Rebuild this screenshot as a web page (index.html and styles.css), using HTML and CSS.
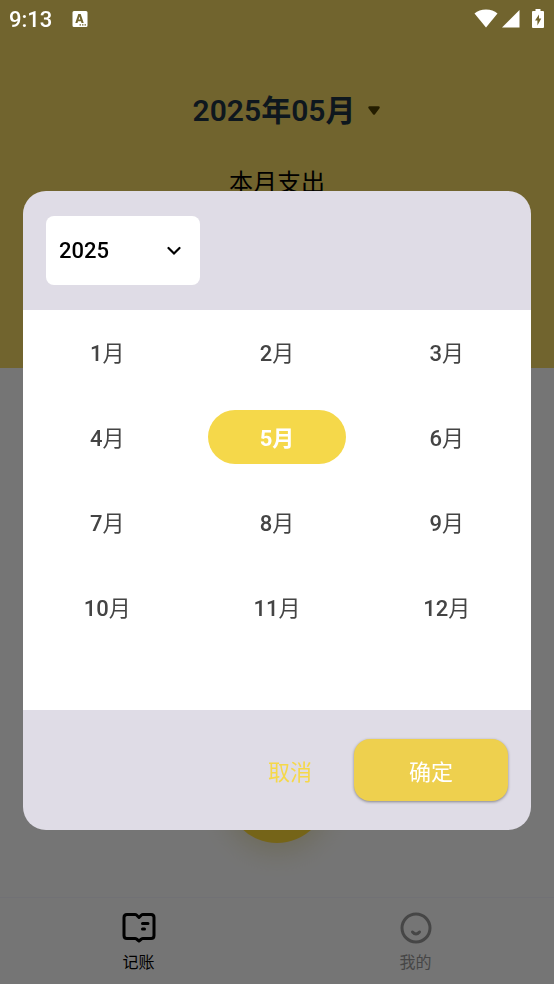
FILE: index.html
```
<!DOCTYPE html>
<html lang="zh-CN">
<head>
    <meta charset="UTF-8">
    <meta name="viewport" content="width=device-width, initial-scale=1.0">
    <title>记账</title>
    <link rel="stylesheet" href="styles.css">
</head>
<body>
    <div class="status-bar">
        <span class="time">9:13</span>
        <svg class="notice" width="16" height="18" viewBox="0 0 16 18">
            <path fill="#fff" fill-rule="evenodd" d="M2 1h12q1.500 0 1.500 1.500v13q0 1.500-1.500 1.500H2Q.5 17 .5 15.500v-13Q.5 1 2 1ZM6.300 4 3.300 13h2.200l.5-1.700h3l.5 1.700h2.200L8.700 4ZM7.500 6.500l.9 3.100H6.600ZM7.500 14.200v1.300h1.500v-1.300Zm2.500 0v1.300h1.500v-1.300Zm2.500 0v1.300H14v-1.300Z"/>
        </svg>
        <div class="signals">
            <svg width="24" height="20" viewBox="0 0 24 20"><path fill="#fff" d="M12 18.500 .5 4.500Q5 .5 12 .5t11.500 4Z"/></svg>
            <svg width="18" height="20" viewBox="0 0 18 20"><path fill="#fff" d="M17.500 1V18.500H0Z"/></svg>
            <svg width="12" height="20" viewBox="0 0 12 20"><path fill="#fff" fill-rule="evenodd" d="M3.500 0h5v2H11q1 0 1 1v15q0 1-1 1H1q-1 0-1-1V3q0-1 1-1h2.500ZM7 5.500 3 11.500h2.400v5L9.300 9.500H7Z"/></svg>
        </div>
    </div>

    <header class="hero">
        <button class="month-title">2025年05月
            <svg width="14" height="10" viewBox="0 0 14 10"><path d="M2.500 1.500h9L7 7.500Z" fill="#4f4000" stroke="#4f4000" stroke-width="2.500" stroke-linejoin="round"/></svg>
        </button>
        <p class="hero-label">本月支出</p>
    </header>
    <main class="content">
        <button class="add" aria-label="添加"></button>
    </main>
    <nav class="tabs">
        <a href="#" class="tab active">
            <svg width="34" height="32" viewBox="0 0 34 32" fill="none" stroke="currentColor" stroke-width="3" stroke-linecap="round" stroke-linejoin="round">
                <path d="M17 5.500 14.500 3Q14 2.500 13 2.500H5Q2 2.500 2 5.500v18q0 3 3 3h8q1 0 1.500.5l2.500 2 2.500-2q.5-.5 1.500-.5h8q3 0 3-3v-18q0-3-3-3h-8q-1 0-1.500.5Z"/>
                <path d="M20.500 11.500h5.500M20.500 17h2"/>
            </svg>
            记账
        </a>
        <a href="#" class="tab">
            <svg width="34" height="32" viewBox="0 0 34 32" fill="none" stroke="currentColor" stroke-width="3" stroke-linecap="round">
                <circle cx="17" cy="16" r="14"/>
                <path d="M13.500 20q3.500 4 7 0"/>
            </svg>
            我的
        </a>
    </nav>

    <div class="overlay">
        <div class="dialog" role="dialog" aria-label="选择月份">
            <div class="dialog-head">
                <div class="year">
                    <select aria-label="年份">
                        <option>2025</option>
                    </select>
                    <svg class="chevron" width="14" height="10" viewBox="0 0 14 10"><path d="m1.500 2 5.500 5.500L12.500 2" fill="none" stroke="#000" stroke-width="2.200" stroke-linecap="round"/></svg>
                </div>
            </div>
            <div class="months">
                <button>1<span>月</span></button>
                <button>2<span>月</span></button>
                <button>3<span>月</span></button>
                <button>4<span>月</span></button>
                <button class="selected">5月</button>
                <button>6<span>月</span></button>
                <button>7<span>月</span></button>
                <button>8<span>月</span></button>
                <button>9<span>月</span></button>
                <button>10<span>月</span></button>
                <button>11<span>月</span></button>
                <button>12<span>月</span></button>
            </div>
            <div class="dialog-foot">
                <button class="cancel">取消</button>
                <button class="confirm">确定</button>
            </div>
        </div>
    </div>
</body>
</html>
```
FILE: styles.css
```
* {
    box-sizing: border-box;
}
body {
    margin: 0;
    min-height: 100vh;
    display: flex;
    flex-direction: column;
    background: #fff;
    font-family: Roboto, "Noto Sans CJK SC", sans-serif;
}
button {
    border: none;
    background: none;
    padding: 0;
    font: inherit;
    cursor: pointer;
}

/* status bar stays above the overlay */
.status-bar {
    position: fixed;
    top: 0;
    left: 0;
    right: 0;
    z-index: 20;
    display: flex;
    align-items: center;
    height: 38px;
    padding: 0 10px 0 9px;
    color: #fff;
}
.time {
    font-size: 22px;
    font-weight: 500;
}
.notice {
    margin-left: 20px;
}
.signals {
    display: flex;
    gap: 4px;
    margin-left: auto;
}
.signals svg:last-child {
    margin-left: 8px;
}

.hero {
    min-height: 368px;
    padding-top: 89px;
    background: #f6d964;
    text-align: center;
}
.month-title {
    display: inline-flex;
    align-items: center;
    gap: 12px;
    padding-left: 20px;
    color: #1f3442;
    font-size: 30px;
    font-weight: 600;
    line-height: 44px;
}
.hero-label {
    margin: 32px 0 0;
    font-size: 24px;
    line-height: 36px;
}
.content {
    flex: 1;
    position: relative;
}
.add {
    position: absolute;
    left: 50%;
    bottom: 54px;
    width: 102px;
    height: 102px;
    margin-left: -51px;
    border-radius: 50%;
    background: #ffd935;
    box-shadow: 0 8px 28px rgba(220, 205, 130, 0.5);
}
.tabs {
    display: flex;
    height: 87px;
    border-top: 1px solid #f6f6ff;
    background: #fefefe;
}
.tab {
    flex: 1;
    display: flex;
    flex-direction: column;
    align-items: center;
    gap: 7px;
    padding-top: 14px;
    color: #999;
    font-size: 16px;
    line-height: 24px;
    text-decoration: none;
}
.tab.active {
    color: #000;
}

.overlay {
    position: fixed;
    inset: 0;
    z-index: 10;
    display: flex;
    align-items: center;
    justify-content: center;
    padding: 36px 23px 0;
    background: rgba(0, 0, 0, 0.54);
}
.dialog {
    width: 100%;
    max-width: 600px;
    overflow: hidden;
    border-radius: 23px;
    background: #dfdce6;
}
.dialog-head {
    padding: 25px 23px;
}
.year {
    position: relative;
    width: 154px;
}
.year select {
    appearance: none;
    display: block;
    width: 100%;
    height: 69px;
    padding: 0 13px;
    border: none;
    border-radius: 8px;
    background: #fff;
    color: #000;
    font: 500 22px Roboto, sans-serif;
}
.chevron {
    position: absolute;
    right: 19px;
    top: 30px;
    pointer-events: none;
}
.months {
    display: grid;
    grid-template-columns: repeat(3, 1fr);
    grid-auto-rows: 54px;
    align-content: start;
    gap: 31px;
    min-height: 400px;
    padding: 15px;
    background: #fff;
}
.months button {
    padding-bottom: 2px;
    border-radius: 27px;
    color: #444;
    font-size: 22px;
    font-weight: 500;
}
.months span {
    font-weight: 400;
}
.months .selected {
    background: #f5d84a;
    color: #fff;
    font-weight: 700;
}
.dialog-foot {
    display: flex;
    justify-content: flex-end;
    gap: 20px;
    padding: 29px 23px;
    font-size: 22px;
}
.cancel {
    padding: 0 22px;
    color: #f5d84a;
}
.confirm {
    width: 154px;
    height: 62px;
    border-radius: 16px;
    background: #eed04e;
    box-shadow: 0 1px 3px rgba(0, 0, 0, 0.4);
    color: #fff;
}
```
